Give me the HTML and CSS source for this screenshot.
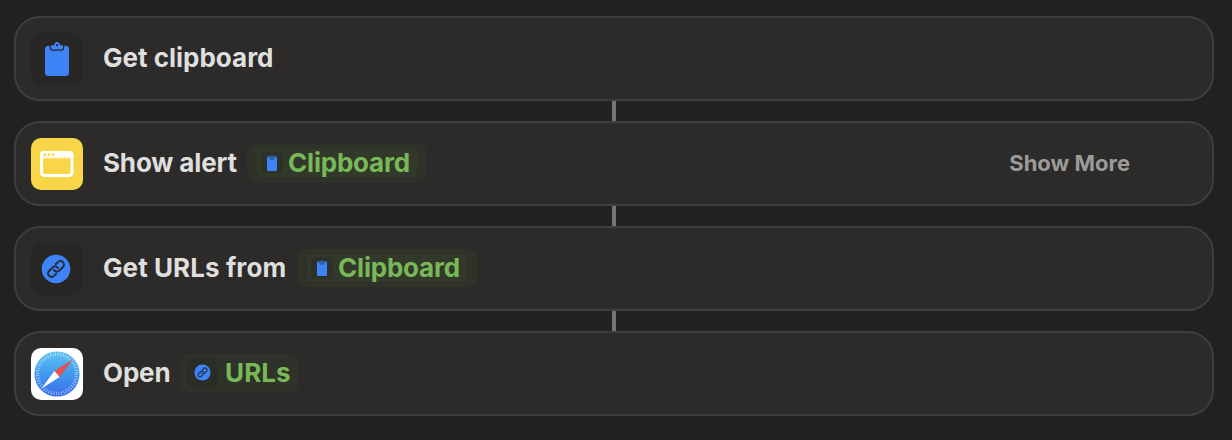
FILE: index.html
```html
<!DOCTYPE html>
<html lang="en">
<head>
<meta charset="utf-8">
<title>Shortcut</title>
<link rel="stylesheet" href="styles.css">
</head>
<body>
<svg class="defs" width="0" height="0" aria-hidden="true">
  <symbol id="clipboard" viewBox="0 0 24 34">
    <path fill="#3c84f7" d="M3.500 3.800H4.700V5.500Q4.700 8.800 7.700 8.800H16.300Q19.300 8.800 19.300 5.500V3.800H20.500Q24 3.800 24 7.300V30.500Q24 34 20.500 34H3.500Q0 34 0 30.500V7.300Q0 3.800 3.500 3.800Z"/>
    <path fill="#3c84f7" fill-rule="evenodd" d="M9 3.200C9.200 1.300 10.300 0 12 0S14.800 1.300 15 3.200H16.800Q18.100 3.200 18.100 4.500V5.500Q18.100 7.500 16.100 7.500H7.900Q5.900 7.500 5.900 5.500V4.500Q5.900 3.200 7.200 3.200ZM12 2.100a1.100 1.100 0 1 0 0 2.200a1.100 1.100 0 1 0 0-2.200Z"/>
  </symbol>
  <symbol id="clipboard-small" viewBox="0 0 10 16">
    <rect y="1.500" width="10" height="14.500" rx="1.300" fill="#3c84f7"/>
    <path fill="#315fa9" d="M2 1.700H3.500Q3.800 .3 5 .3T6.500 1.700H8V3.500Q8 4.700 6.800 4.700H3.200Q2 4.700 2 3.500Z"/>
  </symbol>
  <symbol id="link" viewBox="0 0 30 30">
    <circle cx="15" cy="15" r="14.300" fill="#3c84f7"/>
    <g transform="rotate(-45 15 15)" fill="none" stroke="#252a35" stroke-width="1.900" stroke-linecap="round">
      <path d="M11.800 18.500H8.700a3.500 3.500 0 0 1 0-7H13.700a3.500 3.500 0 0 1 3.400 4.300"/>
      <path d="M18.200 11.500H21.300a3.500 3.500 0 0 1 0 7H16.300a3.500 3.500 0 0 1-3.400-4.300"/>
    </g>
  </symbol>
</svg>
<main class="workflow">
  <section class="action">
    <div class="tile dark"><svg class="clip" width="24" height="34"><use href="#clipboard"/></svg></div>
    <span class="label get">Get clipboard</span>
  </section>
  <div class="connector"></div>
  <section class="action">
    <div class="tile yellow">
      <svg width="52" height="52" viewBox="0 0 52 52">
        <rect x="10.500" y="14.500" width="30.500" height="23" rx="3" fill="none" stroke="#fff" stroke-width="3"/>
        <path fill="#fff" d="M9 19.500V17Q9 13 13 13H38.500Q42.500 13 42.500 17V19.500Z"/>
        <path fill="#fdeeb0" d="M12 19.500H39.500V20.700H12Z"/>
        <g fill="#f9d648"><circle cx="14" cy="16.700" r="1.400"/><circle cx="18.100" cy="16.700" r="1.400"/><circle cx="22.200" cy="16.700" r="1.400"/></g>
      </svg>
    </div>
    <span class="label alert">Show alert</span>
    <span class="token"><span class="token-inner"><span class="mini"><svg width="10" height="16"><use href="#clipboard-small"/></svg></span><span class="value">Clipboard</span></span></span>
    <span class="more">Show More</span>
  </section>
  <div class="connector"></div>
  <section class="action">
    <div class="tile dark"><svg class="link" width="30" height="30"><use href="#link"/></svg></div>
    <span class="label urls">Get URLs from</span>
    <span class="token"><span class="token-inner"><span class="mini"><svg width="10" height="16"><use href="#clipboard-small"/></svg></span><span class="value">Clipboard</span></span></span>
  </section>
  <div class="connector"></div>
  <section class="action">
    <div class="tile white">
      <svg width="52" height="52" viewBox="0 0 52 52">
        <defs><linearGradient id="sky" x1="0" y1="0" x2="0" y2="1"><stop offset="0" stop-color="#5cc3f3"/><stop offset=".5" stop-color="#4299ee"/><stop offset="1" stop-color="#3a6ceb"/></linearGradient></defs>
        <circle cx="26" cy="26" r="22.600" fill="url(#sky)"/>
        <circle cx="26" cy="26" r="19.600" fill="none" stroke="#fff" stroke-opacity=".6" stroke-width="3.600" stroke-dasharray=".8 1.765"/>
        <path fill="#3560bd" opacity=".35" d="M12 39L28.500 28.500L41 13L29 29Z"/>
        <path fill="#e8524a" d="M41.800 11.500L23.400 23.100L28.600 28.900Z"/>
        <path fill="#fff" d="M10.500 40.500L23.400 23.100L28.600 28.900Z"/>
      </svg>
    </div>
    <span class="label open">Open</span>
    <span class="token wide"><span class="mini large"><svg width="17" height="17"><use href="#link"/></svg></span><span class="value">URLs</span></span>
  </section>
</main>
</body>
</html>
```
FILE: styles.css
```css
* { box-sizing: border-box; }
body {
  margin: 0;
  height: 440px;
  overflow: hidden;
  background: #222120;
  font-family: Inter, "Liberation Sans", sans-serif;
  font-weight: 700;
}
.defs { display: block; }
.workflow { padding: 16px 18px 24px 14px; }
.action {
  display: flex;
  align-items: center;
  height: 85px;
  padding: 0 82px 0 15px;
  border: 2px solid #3f3e3d;
  border-radius: 26px;
  background: #2c2b29;
}
.connector { width: 4px; height: 20px; margin-left: 598px; background: #73757b; }
.tile {
  display: flex;
  align-items: center;
  justify-content: center;
  flex: none;
  width: 52px;
  height: 52px;
  margin-right: 20px;
  border-radius: 10px;
  overflow: hidden;
}
.tile svg { display: block; }
.dark { background: #272624; }
.yellow { background: #f9d648; }
.white { background: #fff; }
.clip { margin-top: 1px; }
.link { margin-right: 2px; }
.label {
  flex: none;
  margin-bottom: 2px;
  color: #dfdfde;
  font-size: 26px;
  line-height: 32px;
  letter-spacing: -0.15px;
  white-space: nowrap;
}
.get { width: 172px; letter-spacing: 0; }
.alert { width: 144px; }
.urls { width: 194px; letter-spacing: 0.08px; }
.open { width: 77px; }
.token {
  display: flex;
  align-items: center;
  justify-content: center;
  flex: none;
  width: 180px;
  height: 38px;
  margin-bottom: 2px;
  border-radius: 9px;
  background: #2e3228;
}
.token-inner {
  display: flex;
  align-items: center;
  width: 160px;
  height: 28px;
  padding-left: 4px;
  border-radius: 3px;
  background: #32382a;
}
.mini {
  display: flex;
  align-items: center;
  justify-content: center;
  flex: none;
  width: 22px;
  height: 22px;
  margin-right: 5px;
  border-radius: 4px;
  background: #2d3128;
}
.value { color: #78b856; font-size: 26px; line-height: 28px; letter-spacing: -0.2px; white-space: nowrap; }
.wide { width: 119px; justify-content: flex-start; padding-left: 7px; }
.wide .value { letter-spacing: 0.1px; }
.large { width: 30px; height: 30px; margin-right: 8px; border-radius: 6px; background: #2a2c26; }
.more { margin: 0 0 2px auto; color: #9b9b99; font-size: 22px; line-height: 28px; letter-spacing: 0; white-space: nowrap; }
```
